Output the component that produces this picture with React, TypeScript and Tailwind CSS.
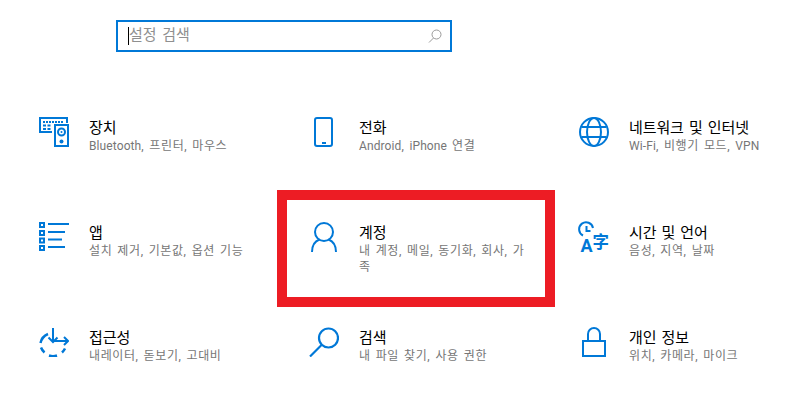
const font = "font-['Roboto','Noto_Sans_CJK_KR',sans-serif]"

// Settings category icons, all on a 30x30 box
function DeviceIcon() {
  return (
    <svg width="30" height="30" viewBox="0 0 30 30" fill="none" stroke="#0078d7" strokeWidth="2">
      <path d="M13 15H1V1h27v5" />
      <rect x="16" y="8" width="13" height="21" />
      <circle cx="22.500" cy="15" r="3.500" />
      <circle cx="22.500" cy="15" r="1" fill="#0078d7" stroke="none" />
      <circle cx="22.500" cy="24.500" r="2" fill="#0078d7" stroke="none" />
      <path d="M4 5h21" strokeDasharray="2 1" />
      <path d="M4 8.500h3M8.500 8.500h3M4 12h3M8.500 12h3" />
    </svg>
  )
}

function PhoneIcon() {
  return (
    <svg width="30" height="30" viewBox="0 0 30 30" fill="none" stroke="#0078d7" strokeWidth="2">
      <rect x="6" y="1" width="17" height="28" rx="2" />
      <path d="M13 26h4" />
    </svg>
  )
}

function GlobeIcon() {
  return (
    <svg width="30" height="30" viewBox="0 0 30 30" fill="none" stroke="#0078d7" strokeWidth="2">
      <circle cx="15" cy="15" r="14" />
      <ellipse cx="15" cy="15" rx="7" ry="14" />
      <path d="M2.500 10h25M2.500 20h25" />
    </svg>
  )
}

function AppsIcon() {
  return (
    <svg width="30" height="30" viewBox="0 0 30 30" fill="none" stroke="#0078d7" strokeWidth="2">
      <rect x="1" y="1" width="4" height="4" />
      <rect x="1" y="9" width="4" height="4" />
      <rect x="1" y="16.500" width="4" height="4" />
      <rect x="1" y="24" width="4" height="4" />
      <path d="M9 2h21M9 10h17M9 17.500h14M9 25h17" />
    </svg>
  )
}

function UserIcon() {
  return (
    <svg width="30" height="30" viewBox="0 0 30 30" fill="none" stroke="#0078d7" strokeWidth="2">
      <circle cx="15" cy="10" r="9" />
      <path d="M3 30c0-7 3.500-11 7.500-12.500M27 30c0-7-3.500-11-7.500-12.500" />
    </svg>
  )
}

function TimeIcon() {
  return (
    <svg className="overflow-visible" width="30" height="30" viewBox="0 0 30 30" fill="none" stroke="#0078d7" strokeWidth="2">
      <path d="M4 13.500A7 7 0 1 1 14 6" />
      <path d="M7.500 4v5h4" />
      <text x="1.500" y="30" fontFamily="Roboto" fontSize="18" fontWeight="700" fill="#0078d7" stroke="none">A</text>
      <text x="13.500" y="26" fontFamily="Noto Sans CJK SC" fontSize="16.500" fontWeight="700" fill="#0078d7" stroke="none">字</text>
    </svg>
  )
}

function AccessIcon() {
  return (
    <svg width="30" height="30" viewBox="0 0 30 30" fill="none" stroke="#0078d7" strokeWidth="2.500">
      <path d="M9 7A12.500 12.500 0 0 0 1.500 16M2 20.500a13 13 0 0 0 3.500 5M10 28.500a13 13 0 0 0 8 0M23 25.500a13 13 0 0 0 3-4" />
      <path d="M14 1v14M9.500 10.500l4.500 4.500 4.500-4.500M14 14h15M25 10l4 4-4 4" strokeWidth="2" />
    </svg>
  )
}

function SearchIcon() {
  return (
    <svg width="30" height="30" viewBox="0 0 30 30" fill="none" stroke="#0078d7" strokeWidth="2.200">
      <circle cx="19.500" cy="11" r="9.500" />
      <path d="M12.500 18L1 29.500" />
    </svg>
  )
}

function LockIcon() {
  return (
    <svg width="30" height="30" viewBox="0 0 30 30" fill="none" stroke="#0078d7" strokeWidth="2">
      <rect x="4" y="14" width="22" height="15" />
      <path d="M9 14V7a6 6 0 0 1 12 0v7" />
    </svg>
  )
}

const items = [
  { title: "장치", desc: "Bluetooth, 프린터, 마우스", icon: <DeviceIcon /> },
  { title: "전화", desc: "Android, iPhone 연결", icon: <PhoneIcon /> },
  { title: "네트워크 및 인터넷", desc: "Wi-Fi, 비행기 모드, VPN", icon: <GlobeIcon /> },
  { title: "앱", desc: "설치 제거, 기본값, 옵션 기능", icon: <AppsIcon /> },
  { title: "계정", desc: "내 계정, 메일, 동기화, 회사, 가족", icon: <UserIcon /> },
  { title: "시간 및 언어", desc: "음성, 지역, 날짜", icon: <TimeIcon /> },
  { title: "접근성", desc: "내레이터, 돋보기, 고대비", icon: <AccessIcon /> },
  { title: "검색", desc: "내 파일 찾기, 사용 권한", icon: <SearchIcon /> },
  { title: "개인 정보", desc: "위치, 카메라, 마이크", icon: <LockIcon /> },
]

// Latin runs sit tighter than Hangul in the description lines
function Desc({ text }: { text: string }) {
  return (
    <>
      {text.split(/([A-Za-z-]+)/).map((part, i) =>
        i % 2 === 1 ? (
          <span key={i} className="tracking-[0.1px]">
            {part}
          </span>
        ) : (
          part
        ),
      )}
    </>
  )
}

export default function App() {
  return (
    <div className={`relative h-[419px] w-[795px] overflow-hidden bg-white ${font}`}>
      {/* search box */}
      <div className="pl-[116px] pt-5">
        <div className="flex h-8 w-[336px] items-center justify-between border-2 border-[#0078d7] pl-[10px] pr-[8px]">
          <div className="flex items-center">
            <span className="h-[18px] w-px bg-black" />
            <span className="-mt-[1px] text-[15px] text-[#8f8f8f] [word-spacing:2px]">설정 검색</span>
          </div>
          <svg width="14" height="14" viewBox="0 0 14 14" fill="none" stroke="#9a9a9a" strokeWidth="1">
            <circle cx="8.500" cy="5.500" r="4.500" />
            <path d="M5.500 9L1 13.500" />
          </svg>
        </div>
      </div>

      {/* category grid */}
      <div className="grid grid-cols-[270px_270px_255px] pl-[39px] pt-[63px]">
        {items.map((item) => (
          <div key={item.title} className="flex h-[105px] items-start">
            <div className="w-[50px] shrink-0 pt-[2px]">{item.icon}</div>
            <div className="w-[170px] pt-[3px]">
              <div className="text-[15px] leading-[20px] tracking-[-0.1px] text-black [word-spacing:1.5px]">{item.title}</div>
              <div className="text-[12px] leading-[16px] tracking-[0.6px] text-[#767676] [word-spacing:1.5px]">
                <Desc text={item.desc} />
              </div>
            </div>
          </div>
        ))}
      </div>

      {/* red highlight drawn over the 계정 tile */}
      <div className="absolute left-[277px] top-[190px] h-[117px] w-[278px] border-[10px] border-[#ed1c24]" />
    </div>
  )
}
